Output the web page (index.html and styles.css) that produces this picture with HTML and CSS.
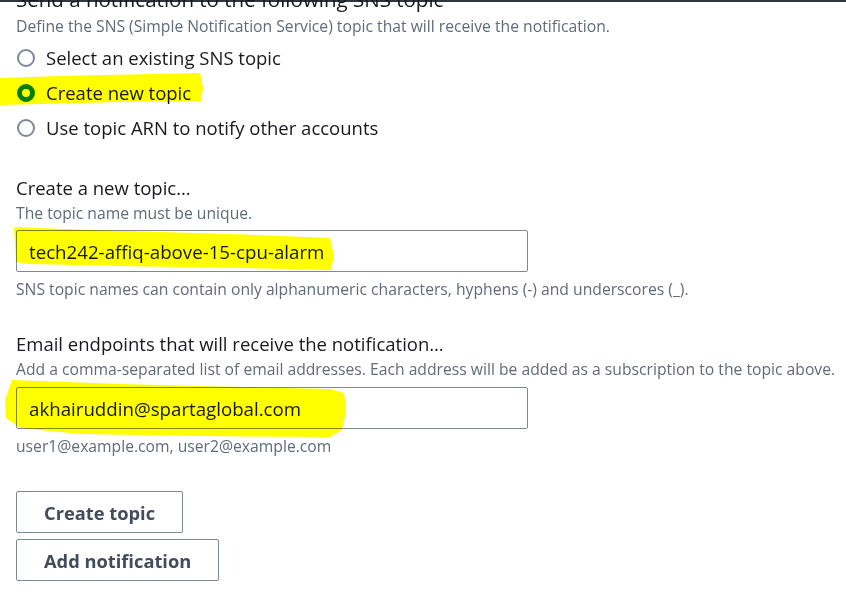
FILE: index.html
```html
<!DOCTYPE html>
<html lang="en">
<head>
<meta charset="utf-8">
<title>SNS topic</title>
<link rel="stylesheet" href="styles.css">
</head>
<body>
<div class="topbar"></div>
<main class="page">
  <h2 class="section-title">Send a notification to the following SNS topic</h2>
  <p class="desc">Define the SNS (Simple Notification Service) topic that will receive the notification.</p>

  <div class="radios">
    <label class="radio"><span class="dot"></span>Select an existing SNS topic</label>
    <label class="radio"><span class="dot checked"></span>Create new topic</label>
    <label class="radio"><span class="dot"></span>Use topic ARN to notify other accounts</label>
  </div>

  <section class="field">
    <div class="label">Create a new topic…</div>
    <div class="desc">The topic name must be unique.</div>
    <div class="input">tech242-affiq-above-15-cpu-alarm</div>
    <div class="hint">SNS topic names can contain only alphanumeric characters, hyphens (-) and underscores (_).</div>
  </section>

  <section class="field">
    <div class="label">Email endpoints that will receive the notification…</div>
    <div class="desc">Add a comma-separated list of email addresses. Each address will be added as a subscription to the topic above.</div>
    <div class="input">akhairuddin@spartaglobal.com</div>
    <div class="hint">user1@example.com, user2@example.com</div>
  </section>

  <div class="buttons">
    <button class="btn">Create topic</button>
    <button class="btn">Add notification</button>
  </div>
</main>
<svg class="marker" width="846" height="595" viewBox="0 0 846 595">
  <polygon points="0,78 60,76 200,73 203,88 201,101 120,102 0,105" />
  <polygon points="14,227 90,230 230,234 330,238 334,256 331,270 240,268 120,266 30,264 16,262" />
  <polygon points="12,380 120,384 240,387 330,389 344,393 346,410 342,430 330,437 200,436 80,434 20,428 6,418 5,400" />
</svg>
</body>
</html>
```

FILE: styles.css
```css
html, body {
  margin: 0;
  padding: 0;
  background: #ffffff;
}
body {
  position: relative;
  width: 846px;
  height: 595px;
  overflow: hidden;
  font-family: "Open Sans", "Noto Sans", sans-serif;
  color: #16191f;
}
.topbar {
  height: 2px;
  background: #2f3640;
}
.page {
  padding: 0 16px;
}
.section-title {
  margin: -15px 0 0;
  font-size: 20.5px;
  font-weight: 400;
  line-height: 24px;
  color: #16191f;
  white-space: nowrap;
}
.desc {
  margin: 0;
  font-size: 15.7px;
  line-height: 22px;
  color: #5f6b7a;
  white-space: nowrap;
}
.section-title + .desc {
  margin-top: 4px;
}
.radios {
  display: flex;
  flex-direction: column;
  margin-top: 3px;
}
.radio {
  display: flex;
  align-items: center;
  gap: 11px;
  height: 35px;
  font-size: 18.5px;
}
.dot {
  width: 14px;
  height: 14px;
  margin-left: 1px;
  border: 2px solid #7d8998;
  border-radius: 50%;
  box-sizing: content-box;
  background: #fff;
}
.dot.checked {
  border: 5px solid #037f0c;
  width: 8px;
  height: 8px;
}
.field {
  margin-top: 30px;
}
.field + .field {
  margin-top: 31px;
}
.label {
  font-size: 18.5px;
  line-height: 26px;
  white-space: nowrap;
}
.field .desc {
  line-height: 24px;
}
.input {
  margin-top: 5px;
  width: 512px;
  height: 42px;
  box-sizing: border-box;
  border: 1px solid #7d8998;
  border-radius: 2px;
  padding: 0 12px;
  display: flex;
  align-items: center;
  font-size: 18.7px;
}
.field + .field .input {
  margin-top: 6px;
}
.hint {
  margin-top: 6px;
  font-size: 15.7px;
  line-height: 22px;
  color: #5f6b7a;
  white-space: nowrap;
}
.buttons {
  margin-top: 34px;
  display: flex;
  flex-direction: column;
  align-items: flex-start;
  gap: 6px;
}
.btn {
  font-family: inherit;
  font-size: 18.3px;
  font-weight: 700;
  color: #414d5c;
  background: #fff;
  border: 1px solid #7d8998;
  border-radius: 2px;
  height: 42px;
  padding: 0 27px;
}
.marker {
  position: absolute;
  left: 0;
  top: 0;
  pointer-events: none;
  mix-blend-mode: multiply;
}
.marker polygon {
  fill: #ffff00;
}
```
